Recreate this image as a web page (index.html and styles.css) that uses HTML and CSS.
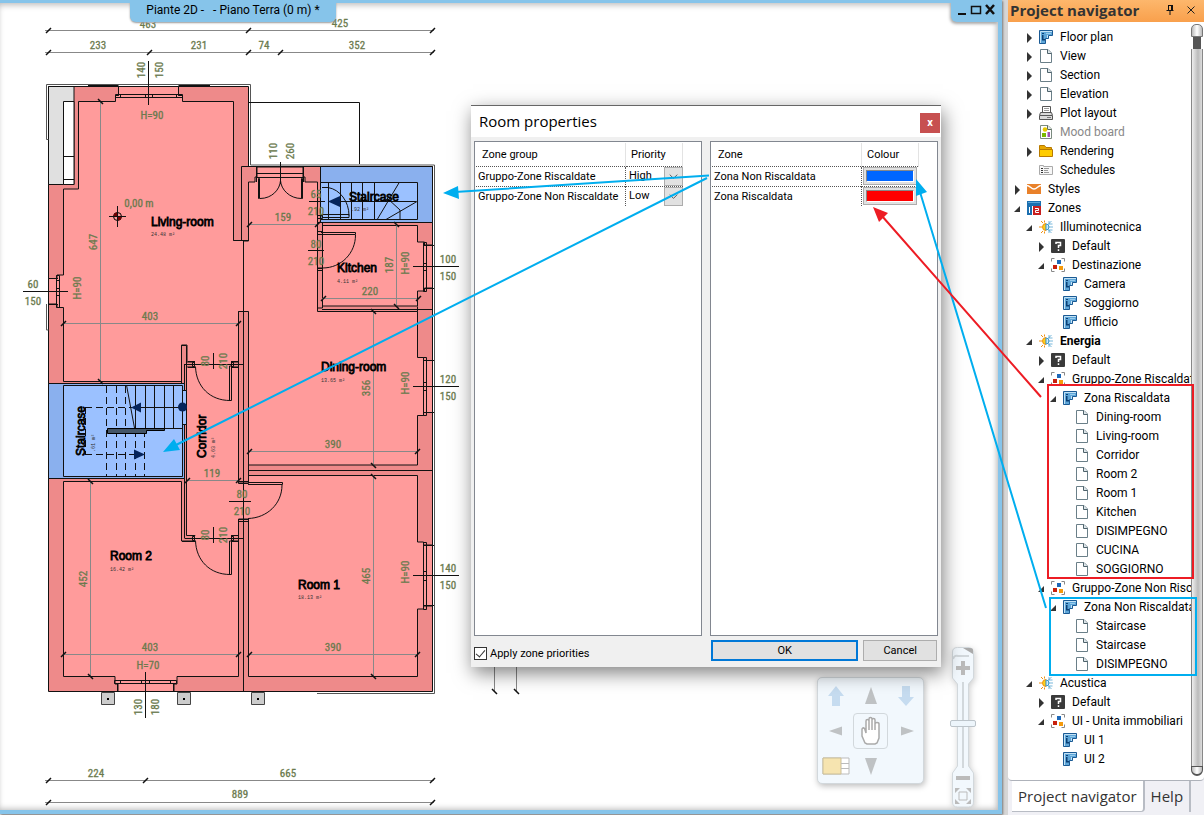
FILE: index.html
```html
<!DOCTYPE html>
<html lang="en">
<head>
<meta charset="utf-8">
<title>Piante 2D - Piano Terra</title>
<link rel="stylesheet" href="styles.css">
</head>
<body>
<svg class="defs" aria-hidden="true">
  <symbol id="i-plan" viewBox="0 0 14 14"><path d="M.5.5h13v5h-4v3h-3v5h-6z" fill="#5ea6d8" stroke="#1a5a94"/><path d="M1.500 13V1.500H13M8.500 5v3" stroke="#c4e2f5" fill="none"/><path d="M3 3h2v1H3zM3 5h1.500v4H6v1.500H3z" fill="#0b3f74"/><path d="M7 3h5v1H7z" fill="#9accec"/></symbol>
  <symbol id="i-page" viewBox="0 0 14 14"><path d="M1.500.5H9L12.500 4v9.500h-11z" fill="#fff" stroke="#6a7f88"/><path d="M8.500.5v4h4" fill="#dce6ea" stroke="#4e626b"/></symbol>
  <symbol id="i-print" viewBox="0 0 14 14"><path d="M3.500 6V.5h8V6" fill="#fff" stroke="#555"/><path d="M5 2.500h5M5 4.500h5" stroke="#999"/><path d="M1.500 6.500h11l1 3v4H.5v-4z" fill="#d9d9d9" stroke="#555"/><path d="M1 9.500h12" stroke="#555"/><path d="M8 11.500h4" stroke="#777"/></symbol>
  <symbol id="i-mood" viewBox="0 0 14 14"><path d="M1.500.5H9L12.500 4v9.500h-11z" fill="#fff" stroke="#7b8b80"/><path d="M8.500.5v4h4" fill="#e6ece6" stroke="#5d6d60"/><circle cx="6" cy="4.500" r="2.300" fill="#e8c800"/><path d="M3 8h4v4H3z" fill="#7ab800"/><path d="M8.500 7H11v5H8.500z" fill="#a050b0"/></symbol>
  <symbol id="i-folder" viewBox="0 0 14 14"><path d="M.5 12.500V1.500h5l1.500 2h5.500v2" fill="#e8a800" stroke="#b87a00"/><path d="M.5 12.500v-7h13v7z" fill="#ffcc00" stroke="#b87a00"/></symbol>
  <symbol id="i-sched" viewBox="0 0 14 14"><path d="M.5 11.500v-9h4v1h9v8z" fill="#f7f7f7" stroke="#aaa"/><path d="M2 5.500h2M2 7.500h2M2 9.500h2" stroke="#333"/><path d="M5 5.500h5M5 7.500h4M5 9.500h5" stroke="#999"/></symbol>
  <symbol id="i-styles" viewBox="0 0 14 14"><path d="M0 2h14v10H0z" fill="#e9812a"/><path d="M0 3.500c3 0 4 3.500 7 3.500s4-3.500 7-3.500" fill="none" stroke="#fff" stroke-width="1.500"/></symbol>
  <symbol id="i-zones" viewBox="0 0 14 14"><path d="M0 0h14v5H5v9H0z" fill="#1b6fb0"/><path d="M1 1h12v1H1z" fill="#5aa5d8"/><path d="M2.500 6v6" stroke="#fff"/><path d="M6 5h8v9H6z" fill="#c81e1e"/><path d="M8 7.500h3.500v2h-3v2H12" fill="none" stroke="#fff"/></symbol>
  <symbol id="i-sun" viewBox="0 0 14 14"><path d="M7 3.500a3.500 3.500 0 0 0 0 7z" fill="#ffd21a" stroke="#f09010"/><path d="M4 3 2 1M3 7H0M4 11l-2 2M5.500 2.500V.5M5.500 11.500v2" stroke="#f09010"/><path d="M7 4a3 3 0 0 1 0 6z" fill="#cfeaf8" stroke="#3d9acb"/><path d="M9 7h5M8.500 5l4-4M8.500 9l4 4M10 1v3h3.500M10 13v-3h3.500" stroke="#3d9acb" stroke-width=".7" fill="none"/></symbol>
  <symbol id="i-default" viewBox="0 0 14 14"><rect width="14" height="14" rx="1" fill="#3a3a3a"/><path d="M5 5V3.500h4.500v3H7.500V9M7.500 10.200V12" fill="none" stroke="#fff" stroke-width="1.500"/></symbol>
  <symbol id="i-group" viewBox="0 0 14 14"><path d="M.5 3.500v-3h3M10.500.5h3v3M13.500 10.500v3h-3M3.500 13.500h-3v-3" fill="none" stroke="#888"/><path d="M6 2h4v4H6z" fill="#1d68b8"/><path d="M2 7h4v4H2z" fill="#c8200c"/><path d="M8 8h4v4H8z" fill="#f59a0c"/></symbol>
  <symbol id="i-right" viewBox="0 0 10 10"><path d="M2 0v10l5-5z" fill="#333"/></symbol>
  <symbol id="i-down" viewBox="0 0 10 10"><path d="M7 2v6H1z" fill="#333"/></symbol>
</svg>

<main class="workspace">
  <svg class="plan" width="560" height="812" viewBox="0 0 560 812" role="img" aria-label="Ground floor plan">
    <path class="wall" d="M48.500 86.500h200v80h184v525h-384z"/>
    <path class="void" d="M48.500 86.500H74v98H48.500z"/>
    <path class="blank" d="M63.500 101.500H74v83H63.500zM63.500 156.500H74M63.500 179.500H74"/>
    <!-- rooms -->
    <path class="room" d="M78.500 101.500h37v-6h3v-9h60v9h4v6h51v139h10v71h-5v50.500h-7v5h7V482h10v37h-10v16.500h-7v5.500h7v135.500h-61.500v7.500h-3v7.500h-56v-7.500h-3v-7.500H63.500v-195h118V541H195v-5.500h-8.500V367h8.500v-5h-8v-17h-5.500v36.500h-118v-74h-6.500v-3.500h-8.500v-25.500h8.500v-3.500h6.500V189h15z"/>
    <path class="room" d="M248.500 182h6.500v-5h2v-10h46v10h2v5h12.500v129.500h100v46h6v3h9v52h-9v3h-6v49.500h-169v-153h-5v-71h5z"/>
    <path class="room" d="M322.500 225.500h95V242h7v3h8v43h-8v3h-7v15h-95z"/>
    <path class="room" d="M248.500 475.500h169V542h6v3h9v61h-9v3h-6v67.500h-169V519h-5v-37h5z"/>
    <path class="opening" d="M195 362h36v5h-36zM195 536h36v5h-36z"/>
    <path class="wall" d="M317.500 222.500h5v12h-5zM317.500 268h5v40h-5zM238.500 481.500v-170h10v170zM238.500 676v-156.500h10V676M181.500 383v-37.500h5V383"/>
    <path class="line" d="M243.500 240v451M248.500 470.500h184M320.500 167v55.500M417.500 311.500v-5M322 309.500h110M241.500 240V166.500h78.500M48.500 383.500h136M48.500 478.500h136M184.500 364v174M184.500 364.500h59M184.500 538.500h59M233.500 240.500h15M188 361.500h7M188 367.500h7M231 361.500h7M231 367.500h7M188 535.500h7M182 541.500h13M231 535.500h7M231 541.500h7"/>
    <!-- stairs -->
    <path class="bluewall" d="M320.500 166.500h112v56h-112zM48.500 383.500h136v95h-136z"/>
    <path class="blue" d="M320.500 182.500h97v37h-97zM63.500 385.500h119v91h-119zM182.500 390.500h4v34h-4z"/>
    <path class="line" d="M328.500 182v37M340.500 182v37M351.500 182v37M362.500 182v37M374.500 182v37M399.500 182l-22 37M417 201.500l-31 18M387 198l13 12v9M330 201.500h86M322 187.500h6c12 2 21 14 21 28M322 214.500h27v3h-27z"/>
    <path d="m328 201.500 12-5.500v11z" fill="#06255c"/>
    <path class="line" d="M135.500 385v43M145.500 385v43M154.500 385v43M164.500 385v43M173.500 385v43M126.500 385l8 43M134 407.500h48M134 428.500h48"/>
    <path class="line dash" d="M106.500 386v90M116.500 386v90M125.500 386v90M135.500 430v46M144.500 430v46M85 407.500h50M85 454.500h60M85.500 407v48"/>
    <path d="M107.500 428.500h57v2h-18v3h-39z" fill="#456" stroke="#000"/>
    <path d="m131 407.500 10-5v10zM145 454.500l-11-5v10z" fill="#06255c"/><circle cx="182.500" cy="407" r="4.500" fill="#06255c"/>
    <!-- cladding, windows and doors -->
    <path class="clad" d="M46.500 84.500h204v80.500h184v528.500H317M46.500 84.500v55h2M46.500 304v26h2M434.500 310v127M434.500 515v120"/>
    <path class="line" d="M88 85.500h30.500M178.500 85.500H210M249 102.500h110.500V164M118.500 86.500v9M178.500 86.500v9M115.500 94.500h67v3h-67zM120.500 94v4M145.500 94v4M152.500 94v4M176.500 94v4M49 278.500h9M49 304.500h9M56.500 275.500h3v32h-3zM56 280.500h4M56 288.500h4M56 295.500h4M117.500 684v7M173.500 684v7M114.500 680.500h62v3h-62zM120.500 680v4M141.500 680v4M149.500 680v4M170.500 680v4M423.500 242.500h3v49h-3zM424 245.500h10M424 288.500h10M423 263.500h4M423 270.500h4M423.500 357.500h3v58h-3zM424 360.500h10M424 412.500h10M423 382.500h4M423 390.500h4M423.500 542.500h3v67h-3zM424 545.500h10M424 605.500h10M423 571.500h4M423 580.500h4M256.500 166v16M303.500 166v16M256 173.500h48M256 177.500h48"/>
    <path class="line" d="M258.500 178.500h1v20h-1zM301.500 178.500h1v20h-1zM260 198.500c12 0 20-9 20.500-18 .5 9 9 18 21 18M321 232.500h34.500v2H321M355.500 235c0 18-14 33-33 33M229.500 366h2v34.500h-2zM230 400.500c-20 0-34-14-34.500-34M229.500 541h2v33.500h-2zM230 574.500c-20 0-34-14-34.500-34M248 482.500h34.500v2H248M282 485c0 19-15 33-34 33.500M317.500 215.500h5v3h-5zM317.500 231.500h5v3h-5zM317.500 268.500h5v2h-5zM192.500 362.500h2v4h-2zM231.500 362.500h2v4h-2zM192.500 536.500h2v4h-2zM231.500 536.500h2v4h-2zM238.500 481.500h10v2h-10zM238.500 519.500h10v2h-10z"/>
    <path class="post" d="M101.500 692.500h13v12h-13zM177.500 692.500h13v12h-13zM251.500 692.500h13v12h-13z"/>
    <path d="M107 698h2v2h-2zM183 698h2v2h-2zM257 698h2v2h-2z"/>
    <!-- opening axes -->
    <path class="line" d="M148.500 61v44M280.500 162v22M23 291.500h45M145.500 672v46M413 266.500h46M413 386.500h46M413 575.500h46M213.500 353v16M213.500 527v16M309 201.500h16M308 250.500h16M229 501.500h22"/>
    <!-- dimensions -->
    <path class="dimline" d="M45 30.500h389M45 52.500h389M45 780.500h389M45 802.500h389M100.500 101v281M63 323.500h175M249 224.500h69M322 298.500h95M396.500 224v83M373.500 311v154M249 451.500h168M90.500 481v196M63 654.500h175M249 654.500h168M373.500 475v202M187 480.500h51M494.500 660v32M516.500 660v32"/>
    <g class="ticks"><path d="m46 33 5-5m195 5 5-5m179 5 5-5m-389 27 5-5m96 5 5-5m94 5 5-5m27 5 5-5m147 5 5-5m-389 733 5-5m92 5 5-5m282 5 5-5m-389 27 5-5m379 5 5-5M61 326l5-5m170 5 5-5m6-94 5-5m63 5 5-5m1 79 5-5m90 5 5-5M247 454l5-5m163 5 5-5M61 657l5-5m170 5 5-5m6 5 5-5m163 5 5-5M185 483l5-5m46 5 5-5"/>
    <path d="m98 99 5 5m-5 275 5 5M88 479l5 5m-5 190 5 5M394 222l5 5m-5 77 5 5M371 309l5 5m-5 149 5 5m-5 6 5 5m-5 195 5 5M492 689l5 5m17-5 5 5"/></g>
    <g class="dim">
      <text x="148" y="28">463</text><text x="340" y="27">425</text><text x="98" y="49">233</text><text x="199" y="49">231</text><text x="264" y="49">74</text><text x="357" y="49">352</text>
      <text x="152" y="119">H=90</text><text x="139" y="207">0,00 m</text><text x="150" y="320">403</text><text x="283" y="221">159</text><text x="370" y="295">220</text><text x="333" y="448">390</text><text x="212" y="477">119</text>
      <text x="150" y="651">403</text><text x="148" y="669">H=70</text><text x="333" y="651">390</text><text x="96" y="777">224</text><text x="288" y="777">665</text><text x="240" y="798">889</text>
      <text x="33" y="288">60</text><text x="33" y="305">150</text><text x="448" y="263">100</text><text x="448" y="280">150</text><text x="448" y="383">120</text><text x="448" y="400">150</text><text x="448" y="572">140</text><text x="448" y="589">150</text>
      <text x="316" y="198">65</text><text x="316" y="215">210</text><text x="316" y="248">80</text><text x="316" y="265">210</text><text x="242" y="498">80</text><text x="242" y="515">210</text>
      <text transform="translate(145 70) rotate(-90)">140</text><text transform="translate(163 70) rotate(-90)">150</text><text transform="translate(277 151) rotate(-90)">110</text><text transform="translate(294 151) rotate(-90)">260</text>
      <text transform="translate(97 242) rotate(-90)">647</text><text transform="translate(81 288) rotate(-90)">H=90</text><text transform="translate(209 361) rotate(-90)">80</text><text transform="translate(227 361) rotate(-90)">210</text>
      <text transform="translate(393 265) rotate(-90)">187</text><text transform="translate(409 263) rotate(-90)">H=90</text><text transform="translate(409 383) rotate(-90)">H=90</text><text transform="translate(409 572) rotate(-90)">H=90</text><text transform="translate(370 388) rotate(-90)">356</text><text transform="translate(370 576) rotate(-90)">465</text>
      <text transform="translate(87 579) rotate(-90)">452</text><text transform="translate(209 535) rotate(-90)">80</text><text transform="translate(227 535) rotate(-90)">210</text><text transform="translate(142 707) rotate(-90)">130</text><text transform="translate(159 707) rotate(-90)">180</text>
    </g>
    <g class="label">
      <text x="151" y="226">Living-room</text><text x="349" y="201">Staircase</text><text x="337" y="272">Kitchen</text><text x="321" y="371">Dining-room</text><text x="110" y="560">Room 2</text><text x="298" y="589">Room 1</text>
      <text transform="translate(85 456) rotate(-90)">Staircase</text><text transform="translate(206 458) rotate(-90)">Corridor</text>
    </g>
    <g class="area">
      <text x="151" y="236">24.48 m²</text><text x="351" y="211">.92 m²</text><text x="337" y="283">4.11 m²</text><text x="321" y="382">13.65 m²</text><text x="110" y="571">16.42 m²</text><text x="298" y="599">18.13 m²</text>
      <text transform="translate(95 452) rotate(-90)">.61 m²</text><text transform="translate(215 458) rotate(-90)">4.63 m²</text>
    </g>
    <circle cx="117.500" cy="216.500" r="4" fill="#ff9b9b" stroke="#000"/><path d="M117.500 216.500v-4a4 4 0 0 0-4 4zM117.500 216.500v4a4 4 0 0 0 4-4z" fill="#700"/><path class="line" d="M109 216.500h17M117.500 206v21"/>
  </svg>

  <h1 class="doc-title">Piante 2D - &nbsp; - Piano Terra (0 m) *</h1>
  <div class="win-controls">
    <button type="button" aria-label="Minimise"><svg viewBox="0 0 12 12"><path d="M2 10h8" stroke-width="2"/></svg></button>
    <button type="button" aria-label="Maximise"><svg viewBox="0 0 12 12"><path d="M1.500 2.500h9v7h-9zM1 2.500h10" stroke-width="1.500"/></svg></button>
    <button type="button" aria-label="Close"><svg viewBox="0 0 12 12"><path d="m2 1 8 9M10 1l-8 9" stroke-width="2.500"/></svg></button>
  </div>

  <div class="pan-pad">
    <button type="button" aria-label="Floor up"><svg class="pale" viewBox="0 0 20 20"><path d="m10 0 8 10h-4v10H6V10H2z"/></svg></button>
    <button type="button" aria-label="Pan up"><svg viewBox="0 0 20 20"><path d="m10 1 6 17H4z"/></svg></button>
    <button type="button" aria-label="Floor down"><svg class="pale" viewBox="0 0 20 20"><path d="M6 0h8v11h4l-8 9-8-9h4z"/></svg></button>
    <button type="button" aria-label="Pan left"><svg viewBox="0 0 20 20"><path d="m3 10 13-4.500v9z"/></svg></button>
    <button type="button" class="hand" aria-label="Pan"><svg viewBox="0 0 24 30"><path d="M6 27 3 20v-7c1-2 3-1 3 1l1 3V5c0-2 3-2 3 0v9-11c0-2 3-2 3 0v11-10c0-2 3-2 3 0v10-6c0-2 4-2 4 0v14l-2 5-2 1H8z"/></svg></button>
    <button type="button" aria-label="Pan right"><svg viewBox="0 0 20 20"><path d="m18 10-13-4.500v9z"/></svg></button>
    <button type="button" aria-label="Navigator view"><svg class="wide" viewBox="0 0 28 18"><path d="M1 1h26v16H1z" fill="#fff" stroke="#bbb"/><path d="M1 1h18v16H1z" fill="#f6e4b0" stroke="#ccbf98"/><path d="M19 6.500h8M19 11.500h8" stroke="#bbb"/></svg></button>
    <button type="button" aria-label="Pan down"><svg viewBox="0 0 20 20"><path d="m10 19 6-17H4z"/></svg></button>
  </div>

  <div class="zoomer">
    <svg class="zoomer-body" width="26" height="161" viewBox="0 0 26 161" aria-hidden="true"><path d="M2.500 5q0-4.500 5-4.500h12q4 1 4 5V31l-5 6v82l5 7v29q0 5-5 5h-11q-5 0-5-5v-29l5-7V37l-5-6z" fill="#f2f8fd" stroke="#d2d8dc"/><path d="M3 12q1-4 5-3h11M13 35v86" fill="none" stroke="#d2d8dc" stroke-width="2"/><path d="m13 1 10 6V3q0-2-3-2z" fill="#aaa"/></svg>
    <button type="button" aria-label="Zoom in"><svg viewBox="0 0 16 16"><path d="M6 1h4v5h5v4h-5v5H6v-5H1V6h5z"/></svg></button>
    <input type="range" aria-label="Zoom" min="0" max="100" value="50">
    <button type="button" aria-label="Zoom out"><svg viewBox="0 0 16 16"><path d="M1 6h14v4H1z"/></svg></button>
    <button type="button" aria-label="Fit to window"><svg viewBox="0 0 16 16"><path d="M0 0h5L0 5zM16 0h-5l5 5zM0 16h5l-5-5zM16 16h-5l5-5z"/><path d="M4 4h8v8H4z" fill="none" stroke="#bbb"/></svg></button>
  </div>

  <section class="dialog" role="dialog" aria-labelledby="dlg-title">
    <header class="dialog-head"><h2 id="dlg-title">Room properties</h2><button type="button" class="dialog-close" aria-label="Close dialog">x</button></header>
    <form class="dialog-body">
      <div class="lists">
        <div class="list">
          <table>
            <thead><tr><th>Zone group</th><th class="second">Priority</th></tr></thead>
            <tbody>
              <tr><td>Gruppo-Zone Riscaldate</td><td><div class="pick"><select aria-label="Priority of Gruppo-Zone Riscaldate"><option>High</option><option>Low</option></select><svg viewBox="0 0 18 18" aria-hidden="true"><path d="m5 7 4 4 4-4"/></svg></div></td></tr>
              <tr><td>Gruppo-Zone Non Riscaldate</td><td><div class="pick"><select aria-label="Priority of Gruppo-Zone Non Riscaldate"><option>Low</option><option>High</option></select><svg viewBox="0 0 18 18" aria-hidden="true"><path d="m5 7 4 4 4-4"/></svg></div></td></tr>
            </tbody>
          </table>
        </div>
        <div class="list">
          <table>
            <thead><tr><th>Zone</th><th class="second">Colour</th></tr></thead>
            <tbody>
              <tr><td>Zona Non Riscaldata</td><td><button type="button" class="swatch" aria-label="Colour of Zona Non Riscaldata"><span class="cold"></span></button></td></tr>
              <tr><td>Zona Riscaldata</td><td><button type="button" class="swatch" aria-label="Colour of Zona Riscaldata"><span class="hot"></span></button></td></tr>
            </tbody>
          </table>
        </div>
      </div>
      <div class="actions">
        <label class="check"><input type="checkbox" checked><span>Apply zone priorities</span></label>
        <div class="buttons"><button type="button" class="ok">OK</button><button type="button" class="cancel">Cancel</button></div>
      </div>
    </form>
  </section>
</main>

<aside class="navigator">
  <header class="nav-head"><h2>Project navigator</h2>
    <button type="button" aria-label="Pin"><svg viewBox="0 0 10 10"><path d="M3.500 0v5.500M3.500.5h4M1.500 5.500h7M5 6v4" fill="none" stroke="#111"/><path d="M6 0h2v6H6z" fill="#111"/></svg></button>
    <button type="button" aria-label="Close panel"><svg viewBox="0 0 10 10"><path d="m1.500 1.500 7 7m0-7-7 7" stroke="#222" fill="none"/></svg></button>
  </header>
  <div class="nav-main">
    <ul class="tree">
      <li><ul>
        <li><div class="row"><svg class="tw"><use href="#i-right"/></svg><svg class="ic"><use href="#i-plan"/></svg><span>Floor plan</span></div></li>
        <li><div class="row"><svg class="tw"><use href="#i-right"/></svg><svg class="ic"><use href="#i-page"/></svg><span>View</span></div></li>
        <li><div class="row"><svg class="tw"><use href="#i-right"/></svg><svg class="ic"><use href="#i-page"/></svg><span>Section</span></div></li>
        <li><div class="row"><svg class="tw"><use href="#i-right"/></svg><svg class="ic"><use href="#i-page"/></svg><span>Elevation</span></div></li>
        <li><div class="row"><svg class="tw"><use href="#i-right"/></svg><svg class="ic"><use href="#i-print"/></svg><span>Plot layout</span></div></li>
        <li><div class="row off"><svg class="tw"></svg><svg class="ic"><use href="#i-mood"/></svg><span>Mood board</span></div></li>
        <li><div class="row"><svg class="tw"><use href="#i-right"/></svg><svg class="ic"><use href="#i-folder"/></svg><span>Rendering</span></div></li>
        <li><div class="row"><svg class="tw"></svg><svg class="ic"><use href="#i-sched"/></svg><span>Schedules</span></div></li>
      </ul></li>
      <li><div class="row"><svg class="tw"><use href="#i-right"/></svg><svg class="ic"><use href="#i-styles"/></svg><span>Styles</span></div></li>
      <li><div class="row"><svg class="tw"><use href="#i-down"/></svg><svg class="ic"><use href="#i-zones"/></svg><span>Zones</span></div>
        <ul>
          <li><div class="row"><svg class="tw"><use href="#i-down"/></svg><svg class="ic"><use href="#i-sun"/></svg><span>Illuminotecnica</span></div>
            <ul>
              <li><div class="row"><svg class="tw"><use href="#i-right"/></svg><svg class="ic"><use href="#i-default"/></svg><span>Default</span></div></li>
              <li><div class="row"><svg class="tw"><use href="#i-down"/></svg><svg class="ic"><use href="#i-group"/></svg><span>Destinazione</span></div>
                <ul>
                  <li><div class="row"><svg class="tw"></svg><svg class="ic"><use href="#i-plan"/></svg><span>Camera</span></div></li>
                  <li><div class="row"><svg class="tw"></svg><svg class="ic"><use href="#i-plan"/></svg><span>Soggiorno</span></div></li>
                  <li><div class="row"><svg class="tw"></svg><svg class="ic"><use href="#i-plan"/></svg><span>Ufficio</span></div></li>
                </ul></li>
            </ul></li>
          <li><div class="row current"><svg class="tw"><use href="#i-down"/></svg><svg class="ic"><use href="#i-sun"/></svg><span>Energia</span></div>
            <ul>
              <li><div class="row"><svg class="tw"><use href="#i-right"/></svg><svg class="ic"><use href="#i-default"/></svg><span>Default</span></div></li>
              <li><div class="row"><svg class="tw"><use href="#i-down"/></svg><svg class="ic"><use href="#i-group"/></svg><span>Gruppo-Zone Riscaldate</span></div>
                <ul><li><div class="row"><svg class="tw"><use href="#i-down"/></svg><svg class="ic"><use href="#i-plan"/></svg><span>Zona Riscaldata</span></div>
                  <ul>
                    <li><div class="row"><svg class="tw"></svg><svg class="ic"><use href="#i-page"/></svg><span>Dining-room</span></div></li>
                    <li><div class="row"><svg class="tw"></svg><svg class="ic"><use href="#i-page"/></svg><span>Living-room</span></div></li>
                    <li><div class="row"><svg class="tw"></svg><svg class="ic"><use href="#i-page"/></svg><span>Corridor</span></div></li>
                    <li><div class="row"><svg class="tw"></svg><svg class="ic"><use href="#i-page"/></svg><span>Room 2</span></div></li>
                    <li><div class="row"><svg class="tw"></svg><svg class="ic"><use href="#i-page"/></svg><span>Room 1</span></div></li>
                    <li><div class="row"><svg class="tw"></svg><svg class="ic"><use href="#i-page"/></svg><span>Kitchen</span></div></li>
                    <li><div class="row"><svg class="tw"></svg><svg class="ic"><use href="#i-page"/></svg><span>DISIMPEGNO</span></div></li>
                    <li><div class="row"><svg class="tw"></svg><svg class="ic"><use href="#i-page"/></svg><span>CUCINA</span></div></li>
                    <li><div class="row"><svg class="tw"></svg><svg class="ic"><use href="#i-page"/></svg><span>SOGGIORNO</span></div></li>
                  </ul></li></ul></li>
              <li><div class="row"><svg class="tw"><use href="#i-down"/></svg><svg class="ic"><use href="#i-group"/></svg><span>Gruppo-Zone Non Riscaldate</span></div>
                <ul><li><div class="row"><svg class="tw"><use href="#i-down"/></svg><svg class="ic"><use href="#i-plan"/></svg><span>Zona Non Riscaldata</span></div>
                  <ul>
                    <li><div class="row"><svg class="tw"></svg><svg class="ic"><use href="#i-page"/></svg><span>Staircase</span></div></li>
                    <li><div class="row"><svg class="tw"></svg><svg class="ic"><use href="#i-page"/></svg><span>Staircase</span></div></li>
                    <li><div class="row"><svg class="tw"></svg><svg class="ic"><use href="#i-page"/></svg><span>DISIMPEGNO</span></div></li>
                  </ul></li></ul></li>
            </ul></li>
          <li><div class="row"><svg class="tw"><use href="#i-down"/></svg><svg class="ic"><use href="#i-sun"/></svg><span>Acustica</span></div>
            <ul>
              <li><div class="row"><svg class="tw"><use href="#i-right"/></svg><svg class="ic"><use href="#i-default"/></svg><span>Default</span></div></li>
              <li><div class="row"><svg class="tw"><use href="#i-down"/></svg><svg class="ic"><use href="#i-group"/></svg><span>UI - Unita immobiliari</span></div>
                <ul>
                  <li><div class="row"><svg class="tw"></svg><svg class="ic"><use href="#i-plan"/></svg><span>UI 1</span></div></li>
                  <li><div class="row"><svg class="tw"></svg><svg class="ic"><use href="#i-plan"/></svg><span>UI 2</span></div></li>
                </ul></li>
            </ul></li>
        </ul></li>
    </ul>
    <div class="scroll"><span class="cap"></span><span class="knob"></span><span class="track"></span><span class="foot"></span></div>
  </div>
  <nav class="tabs"><button type="button" class="active">Project navigator</button><button type="button">Help</button></nav>
</aside>

<svg class="notes" width="1204" height="815" viewBox="0 0 1204 815" aria-hidden="true">
  <g fill="none" stroke="#00aeef" stroke-width="2"><path d="M709 175.500 455 192M707 178 176 445M1046 608 920 192"/><path d="M1050 598h146v77h-146z"/></g>
  <path d="m443 193 15-7 1 13zM163 452l11-13 6 11zM916 179l11 13-11 4z" fill="#00aeef"/>
  <g fill="none" stroke="#ed1c24" stroke-width="2"><path d="M1041 397 882 216M1048 385h145v193h-145z"/></g>
  <path d="m873 207 15 6-9 9z" fill="#ed1c24"/>
</svg>
</body>
</html>
```
FILE: styles.css
```css
* { box-sizing: border-box; }
body {
  margin: 0;
  display: flex;
  min-height: 100vh;
  background: #d6d6d6;
  font: 12px/19px Roboto, "Open Sans", "Noto Sans", sans-serif;
  color: #000;
}
button, select { font: inherit; color: inherit; padding: 0; border: 0; background: none; }
h1, h2, ul { margin: 0; padding: 0; font-weight: 400; }
ul { list-style: none; }
.defs { position: absolute; width: 0; height: 0; }

/* drawing window */
.workspace {
  position: relative;
  flex: 1;
  margin-right: 6px;
  margin-bottom: 1px;
  border: solid #86c4ea;
  border-width: 3px 4px 4px 0;
  background: #fff;
  box-shadow: inset 0 4px 6px -2px #bbb, inset -3px -3px 6px -2px #bbb, 1px 1px 2px #777;
  overflow: hidden;
}
.plan { position: absolute; left: 0; top: -3px; display: block; }
.wall { fill: #ee8a8a; stroke: #111; }
.room { fill: #ff9b9b; stroke: #111; }
.opening { fill: #ff9b9b; }
.void { fill: #e0e0e0; stroke: #111; }
.blank { fill: #fff; stroke: #111; }
.bluewall { fill: #8ab0ee; stroke: #111; }
.blue { fill: #9bc1ff; stroke: #111; }
.post { fill: #ccc; stroke: #444; }
.line { fill: none; stroke: #111; }
.dash { stroke-dasharray: 7 4; }
.clad { fill: none; stroke: #555; }
.dimline { fill: none; stroke: #888; }
.ticks { fill: none; stroke: #111; stroke-width: 1.5; }
.dim { fill: #6b7a4e; stroke: #6b7a4e; stroke-width: 0.3px; font: 11px "Liberation Sans Narrow", "Roboto Condensed", "Open Sans Condensed", "Liberation Sans", sans-serif; text-anchor: middle; }
.label { font: 12px "Liberation Sans", sans-serif; stroke: #000; stroke-width: 0.8px; }
.area { font: 5px "Liberation Mono", monospace; fill: #333; }

.doc-title {
  position: absolute; left: 130px; top: -3px; width: 206px; height: 22px;
  text-align: center; font-size: 12px; line-height: 20px;
  background: #86c4ea; border-radius: 0 0 6px 6px; box-shadow: 0 1px 2px #999;
}
.win-controls {
  position: absolute; right: 0; top: -3px; height: 22px; width: 47px;
  display: flex; align-items: center; justify-content: flex-end; gap: 2px; padding: 0 2px 2px 0;
  background: #86c4ea; border-radius: 0 0 0 6px; box-shadow: -1px 2px 3px #aaa;
}
.win-controls button, .win-controls svg { display: block; width: 12px; height: 12px; }
.win-controls path { fill: none; stroke: #111; }

.pan-pad {
  position: absolute; left: 817px; top: 674px;
  display: grid; grid-template: repeat(3, 35px) / repeat(3, 35px); place-items: center;
  background: #f2f8fd; border: 1px solid #d2d8dc; border-radius: 5px; box-shadow: 1px 2px 6px #bbb;
}
.pan-pad button { width: 30px; height: 30px; display: grid; place-items: center; }
.pan-pad svg { width: 20px; height: 20px; fill: #bfc2c4; }
.pan-pad .pale { fill: #c6dcf0; }
.pan-pad .wide { width: 28px; height: 18px; }
.pan-pad .hand { width: 35px; height: 36px; border: 1px solid #d2d8dc; border-radius: 4px; }
.pan-pad .hand svg { width: 24px; height: 30px; fill: #fff; stroke: #aaa; stroke-width: 1.5; }

.zoomer {
  position: absolute; left: 950px; top: 644px; width: 26px; height: 161px; padding-top: 12px;
  display: flex; flex-direction: column; align-items: center;
}
.zoomer-body { position: absolute; left: 0; top: 0; filter: drop-shadow(1px 2px 3px #ccc); }
.zoomer button { position: relative; width: 16px; height: 18px; }
.zoomer button svg { display: block; width: 16px; height: 16px; fill: #bbb; }
.zoomer input {
  position: relative; writing-mode: vertical-lr; appearance: none; background: none;
  width: 26px; height: 92px; margin: 0;
}
.zoomer input::-webkit-slider-thumb {
  appearance: none; width: 26px; height: 7px;
  background: #edf5fb; border: 1px solid #bcc4ca; border-radius: 2px;
}

/* room properties dialog */
.dialog {
  position: absolute; left: 471px; top: 102px; width: 470px; height: 562px;
  display: flex; flex-direction: column;
  font-size: 11px; line-height: 13px;
  background: #f0f0f0; border-top: 1px solid #666;
  box-shadow: 2px 6px 18px rgba(0, 0, 0, 0.5);
}
.dialog-head { display: flex; justify-content: space-between; align-items: center; height: 31px; padding: 2px 1px 0 8px; background: #fff; }
.dialog-head h2 { padding-bottom: 4px; font: 15px/20px "Open Sans", "Noto Sans", sans-serif; }
.dialog-close { width: 20px; height: 20px; background: #c75050; color: #fff; font-weight: 700; }
.dialog-body { flex: 1; display: flex; flex-direction: column; padding: 4px 3px 6px; }
.lists { flex: 1; display: grid; grid-template-columns: 1fr 1fr; gap: 8px; }
.list { background: #fff; border: 1px solid #828790; padding: 1px; }
table { border-collapse: collapse; table-layout: fixed; width: 207px; }
th { height: 23px; padding: 0 6px; text-align: left; font-weight: 400; }
th.second { width: 57px; border: solid #e3e3e3; border-width: 0 1px; padding: 0 5px; }
tr { border-bottom: 1px dotted #555; }
tbody tr:last-child { border: 0; }
td { height: 20px; padding: 0 2px; white-space: nowrap; }
td + td { padding: 0; border-left: 1px dotted #555; }
.pick { display: flex; position: relative; height: 19px; }
.pick select { appearance: none; width: 100%; padding: 0 0 2px 3px; }
.pick svg { position: absolute; right: 0; width: 19px; height: 19px; background: #e1e1e1; border: 1px solid #adadad; pointer-events: none; }
.pick path { fill: none; stroke: #555; }
.swatch { display: block; width: 54px; height: 18px; margin-left: 1px; padding: 2px; border: 1px solid #adadad; background: #e1e1e1; }
.swatch span { display: block; height: 12px; border: 1px solid; border-color: #888 #fff #fff #888; }
.cold { background: #0066ff; }
.hot { background: #ff0000; }
.actions { display: grid; grid-template-columns: 1fr 1fr; gap: 8px; padding: 4px 0 0; }
.check { display: flex; align-items: center; gap: 3px; padding-top: 6px; }
.check input {
  appearance: none; width: 13px; height: 13px; margin: 0; border: 1px solid #333; background: #fff;
  display: grid; place-items: center;
}
.check input:checked::before { content: ""; width: 4px; height: 8px; margin-bottom: 2px; border: solid #333; border-width: 0 1px 1px 0; transform: rotate(40deg); }
.buttons { display: flex; gap: 5px; padding: 0 1px; }
.buttons button { height: 21px; background: #e1e1e1; border: 1px solid #adadad; }
.buttons .ok { flex: 2; border: 2px solid #0078d7; }
.buttons .cancel { flex: 1; }

/* project navigator */
.navigator { width: 196px; display: flex; flex-direction: column; background: #f0f0f5; }
.nav-head { display: flex; align-items: center; gap: 11px; height: 22px; padding: 0 8px 2px 2px; background: linear-gradient(#fdb76c, #f9a04c); }
.nav-head h2 { flex: 1; font: 700 15px/20px "Open Sans", "Noto Sans", sans-serif; color: #333; white-space: nowrap; }
.nav-head svg { display: block; width: 10px; height: 10px; }
.nav-main { flex: 1; display: flex; background: #fff; border-bottom: 1px solid #aeb2ba; border-radius: 0 0 4px 4px; padding: 2px 1px 4px 0; }
.tree { flex: 1; min-width: 0; overflow: hidden; padding: 4px 0 0 5px; }
.tree ul { padding-left: 12px; }
.row { display: flex; align-items: center; height: 19px; white-space: nowrap; }
.row.off { color: #888; }
.row.current { font-weight: 700; }
.tw { flex: none; width: 10px; height: 10px; margin: 1px 4px 0 0; }
.ic { flex: none; width: 14px; height: 14px; margin: 0 7px 1px 0; }
.scroll { width: 12px; display: flex; flex-direction: column; align-items: center; }
.cap { width: 12px; height: 13px; border: 1px solid #777; border-radius: 5px 5px 0 0; background: linear-gradient(90deg, #bbb, #fff, #bbb); }
.knob { width: 8px; height: 12px; background: #555; }
.track { flex: 1; width: 12px; border: solid #888; border-width: 0 1px; background: linear-gradient(90deg, #eee, #bbb 60%, #ddd); }
.foot { width: 12px; height: 10px; border: 1px solid #555; border-bottom-width: 2px; border-radius: 0 0 6px 6px; background: linear-gradient(90deg, #bbb, #fff, #bbb); }
.tabs { display: flex; height: 34px; padding: 0 4px 3px; font: 15px/19px "Open Sans", "Noto Sans", sans-serif; color: #333; }
.tabs button { padding: 0 6px; border-right: 2px solid #b8bcc4; white-space: nowrap; }
.tabs .active { background: #fff; border-bottom: 1px solid #b8bcc4; border-radius: 0 0 4px 0; }

.notes { position: absolute; left: 0; top: 0; pointer-events: none; }
```
